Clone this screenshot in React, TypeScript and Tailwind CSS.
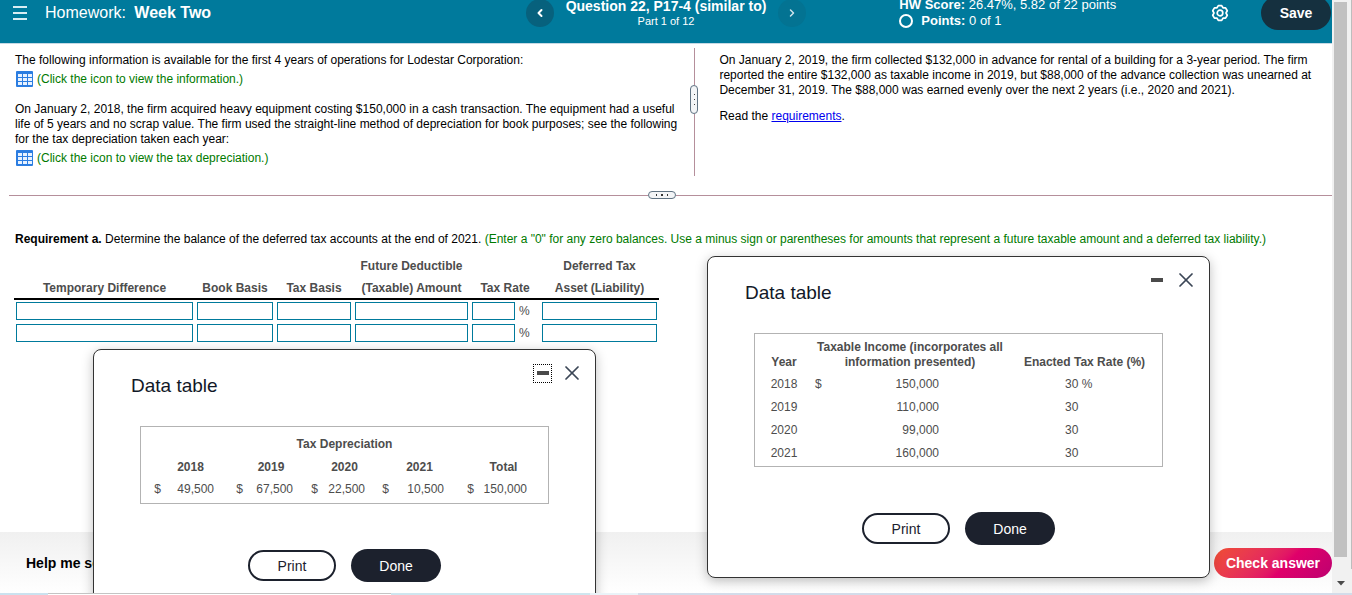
import { X, ChevronLeft, ChevronRight } from 'lucide-react';
import type { ReactNode } from 'react';

const incomeRows = [
  { year: '2018', sign: '$', income: '150,000', rate: '30', unit: '%' },
  { year: '2019', sign: '', income: '110,000', rate: '30', unit: '' },
  { year: '2020', sign: '', income: '99,000', rate: '30', unit: '' },
  { year: '2021', sign: '', income: '160,000', rate: '30', unit: '' },
];

const depreciation = [
  { label: '2018', amount: '49,500' },
  { label: '2019', amount: '67,500' },
  { label: '2020', amount: '22,500' },
  { label: '2021', amount: '10,500' },
  { label: 'Total', amount: '150,000' },
];

const answerFields = ['Temporary Difference', 'Book Basis', 'Tax Basis', '(Taxable) Amount', 'Tax Rate', 'Asset (Liability)'];

const TableIcon = () => (
  <svg width="17" height="16" viewBox="0 0 17 16" aria-hidden="true">
    <rect width="17" height="16" rx="1" fill="#2b7de1" />
    {[4, 8, 12].map((y) =>
      [2, 7, 12].map((x) => <rect key={`${x}-${y}`} x={x} y={y - 1} width="4" height="3" fill="#e8f2ff" />)
    )}
  </svg>
);

const GearIcon = () => (
  <svg width="18" height="18" viewBox="0 0 18 18" fill="none" stroke="white" strokeWidth="1.7" strokeLinejoin="round" aria-hidden="true">
    <path d="M7.3 1.6h3.400L12 3.800l2.560.020 1.710 2.960L15 9l1.270 2.220-1.710 2.960L12 14.200l-1.300 2.200H7.300L6 14.200l-2.560-.020-1.710-2.960L3 9 1.730 6.780l1.710-2.960L6 3.800z" />
    <circle cx="9" cy="9" r="2.8" />
  </svg>
);

const IconLink = ({ children }: { children: ReactNode }) => (
  <button type="button" className="flex items-center gap-1 pl-px text-left text-[#007a00]">
    <TableIcon />
    <span>{children}</span>
  </button>
);

interface DialogProps {
  id: string;
  place: string;
  focused?: boolean;
  children: ReactNode;
}

const DataDialog = ({ id, place, focused, children }: DialogProps) => (
  <section
    role="dialog"
    aria-labelledby={id}
    className={`absolute w-[503px] rounded-lg border border-[#333] bg-white pb-8 shadow-[0_3px_12px_rgba(0,0,0,0.25)] ${place}`}
  >
    <div className="flex h-19 items-start justify-between pr-[11px] pl-[37px]">
      <h2 id={id} className="pt-6 text-[19px] leading-6 text-[#111827]">Data table</h2>
      <div className="flex items-center gap-2 pt-[11px]">
        <button
          type="button"
          aria-label="Minimize"
          className={`flex size-[19px] items-center justify-center border border-dotted ${focused ? 'border-black' : 'border-transparent'}`}
        >
          <span className="h-1 w-3 bg-[#4a4a4a]" />
        </button>
        <button type="button" aria-label="Close" className="text-[#3b4656]">
          <X size={24} strokeWidth={1.75} />
        </button>
      </div>
    </div>
    <div className="mx-[46px] border border-[#b3b3b3] text-xs text-[#4d4d4d]">{children}</div>
    <div className="mt-[45px] flex items-center justify-center gap-[15px] text-sm">
      <button type="button" className="h-[31px] w-22 rounded-full border-2 border-[#1c212d] text-[#1c212d]">Print</button>
      <button type="button" className="h-[33px] w-[90px] rounded-full bg-[#1c212d] text-white">Done</button>
    </div>
  </section>
);

const Header = () => (
  <header className="h-11 shrink-0 overflow-hidden border-b border-[#c5d9e4] bg-[#007a9c] text-white">
    <div className="-mt-1 grid grid-cols-[1fr_auto_1fr] items-center">
      <div className="flex items-center gap-[18px] pl-[13px]">
        <button type="button" aria-label="Menu" className="flex w-[14px] flex-col gap-1">
          <span className="h-[2px] bg-[#d9edf3]" />
          <span className="h-[2px] bg-[#d9edf3]" />
          <span className="h-[2px] bg-[#d9edf3]" />
        </button>
        <h1 className="text-base">Homework: <b className="ml-1">Week Two</b></h1>
      </div>
      <div className="flex items-center gap-3">
        <button type="button" aria-label="Previous question" className="flex size-7 items-center justify-center rounded-full bg-[#07617d]">
          <ChevronLeft size={12} strokeWidth={4} />
        </button>
        <div className="text-center">
          <p className="text-sm leading-4 font-bold">Question 22, P17-4 (similar to)</p>
          <p className="text-[11px] leading-[14px]">Part 1 of 12</p>
        </div>
        <button type="button" aria-label="Next question" className="flex size-7 items-center justify-center rounded-full bg-[#037392] text-[#cfe4eb]">
          <ChevronRight size={12} strokeWidth={3} />
        </button>
      </div>
      <div className="flex items-center pl-[93px]">
        <div className="text-[13px] leading-4">
          <p><b>HW Score:</b> 26.47%, 5.82 of 22 points</p>
          <p className="flex items-center gap-2">
            <span className="size-3.5 rounded-full border-2 border-white" />
            <span><b>Points:</b> 0 of 1</span>
          </p>
        </div>
        <button type="button" aria-label="Settings" className="mr-8 ml-auto">
          <GearIcon />
        </button>
        <button type="button" className="mr-px h-[34px] w-[70px] rounded-full bg-[#15303f] text-sm font-bold">Save</button>
      </div>
    </div>
  </header>
);

const Problem = () => (
  <div className="grid h-32 grid-cols-[12fr_24px_11fr] text-xs leading-[15px]">
    <div className="flex flex-col items-start gap-[3px] pt-[5px] pl-[15px]">
      <p>The following information is available for the first 4 years of operations for Lodestar Corporation:</p>
      <IconLink>(Click the icon to view the information.)</IconLink>
      <p className="mt-3">
        On January 2, 2018, the firm acquired heavy equipment costing $150,000 in a cash transaction. The equipment had a useful
        life of 5 years and no scrap value. The firm used the straight-line method of depreciation for book purposes; see the
        following for the tax depreciation taken each year:
      </p>
      <IconLink>(Click the icon to view the tax depreciation.)</IconLink>
    </div>
    <div className="flex flex-col items-center">
      <span className="h-[37px] w-px bg-[#b58f9b]" />
      <button type="button" aria-label="Resize columns" className="flex h-[29px] w-2 flex-col items-center justify-center gap-1 rounded-full border border-[#5f7282] bg-[#f3f5f7]">
        <span className="size-px bg-[#444]" />
        <span className="size-px bg-[#444]" />
        <span className="size-px bg-[#444]" />
      </button>
      <span className="w-px flex-1 bg-[#b58f9b]" />
    </div>
    <div className="pt-[5px] pr-2 pl-[13px]">
      <p>
        On January 2, 2019, the firm collected $132,000 in advance for rental of a building for a 3-year period. The firm
        reported the entire $132,000 as taxable income in 2019, but $88,000 of the advance collection was unearned at
        December 31, 2019. The $88,000 was earned evenly over the next 2 years (i.e., 2020 and 2021).
      </p>
      <p className="mt-[11px]">
        Read the <a href="#requirements" className="text-[#0000ee] underline">requirements</a>.
      </p>
    </div>
  </div>
);

const AnswerTable = () => (
  <table className="ml-3.5 table-fixed border-collapse text-xs text-[#4d4d4d]">
    <colgroup>
      <col className="w-[181px]" />
      <col className="w-[80px]" />
      <col className="w-[78px]" />
      <col className="w-[117px]" />
      <col className="w-[70px]" />
      <col className="w-[119px]" />
    </colgroup>
    <thead>
      <tr className="h-[22px]">
        <td colSpan={3} />
        <th scope="col">Future Deductible</th>
        <td />
        <th scope="col">Deferred Tax</th>
      </tr>
      <tr className="h-[22px] border-b-2 border-black">
        {answerFields.map((field) => (
          <th key={field} scope="col" className="whitespace-nowrap">{field}</th>
        ))}
      </tr>
    </thead>
    <tbody>
      {[1, 2].map((row) => (
        <tr key={row} className="h-[22px]">
          {answerFields.map((field) => (
            <td key={field} className="p-0.5">
              <div className="flex h-[18px] items-center gap-1">
                <input
                  type="text"
                  aria-label={`${field}, row ${row}`}
                  className={`h-[18px] border border-[#007a9c] bg-white ${field === 'Tax Rate' ? 'w-[43px]' : 'w-full'}`}
                />
                {field === 'Tax Rate' && <span>%</span>}
              </div>
            </td>
          ))}
        </tr>
      ))}
    </tbody>
  </table>
);

const Scrollbar = () => (
  <div className="flex w-5 shrink-0 justify-between bg-[#f1f1f1]" aria-hidden="true">
    <div className="flex flex-col items-center pt-0.5 pl-0.5">
      <div className="w-[13px] flex-1 bg-[#c1c1c1]" />
      <div className="flex h-9 items-center pt-4">
        <svg width="8" height="5" viewBox="0 0 8 5"><path d="M0 0h8L4 4.5z" fill="#4a4a4a" /></svg>
      </div>
    </div>
    <div className="mb-6 w-px bg-[#bdbdbd]" />
  </div>
);

const App = () => (
  <div className="flex h-screen flex-col bg-white font-['Liberation_Sans',Arial,sans-serif] text-black">
    <div className="flex min-h-0 flex-1">
      <main className="relative flex min-w-0 flex-1 flex-col overflow-hidden">
        <Header />
        <div className="flex-1 pt-1">
          <Problem />
          <div className="mt-[15px] flex items-center pl-[9px]">
            <span className="h-px grow-39 bg-[#b58f9b]" />
            <button type="button" aria-label="Resize rows" className="flex h-2 w-7 items-center justify-center gap-1 rounded-full border border-[#5f7282] bg-[#f3f5f7]">
              <span className="h-0.5 w-px bg-[#333]" />
              <span className="size-0.5 bg-[#333]" />
              <span className="h-0.5 w-px bg-[#333]" />
            </button>
            <span className="h-px grow-40 bg-[#b58f9b]" />
          </div>
          <p className="mt-8 mb-2 pl-[15px] text-xs">
            <b>Requirement a.</b> Determine the balance of the deferred tax accounts at the end of 2021.{' '}
            <span className="text-[#007a00]">
              (Enter a "0" for any zero balances. Use a minus sign or parentheses for amounts that represent a future taxable
              amount and a deferred tax liability.)
            </span>
          </p>
          <AnswerTable />
        </div>
        <footer className="flex h-[61px] shrink-0 items-center justify-between bg-linear-to-b from-[#f0f0f0] to-white pl-[26px] text-sm font-bold">
          <button type="button">Help me solve this</button>
          <button type="button" className="h-[30px] w-[118px] rounded-full bg-linear-135 from-[#f04e30] via-[#e0006a] via-60% to-[#bd0070] text-white">
            Check answer
          </button>
        </footer>

        <DataDialog id="depreciation-title" place="top-[349px] left-[93px]" focused>
          <table className="mt-1.5 mb-[3px] w-full table-fixed">
            <colgroup>
              <col className="w-5" />
              <col className="w-[53px]" />
              <col className="w-[29px]" />
              <col className="w-[50px]" />
              <col className="w-[25px]" />
              <col className="w-[47px]" />
              <col className="w-6" />
              <col className="w-[55px]" />
              <col className="w-[30px]" />
              <col className="w-[53px]" />
              <col />
            </colgroup>
            <thead>
              <tr className="h-[22px]">
                <th colSpan={11} scope="colgroup">Tax Depreciation</th>
              </tr>
              <tr className="h-[23px]">
                {depreciation.flatMap((d) => [
                  <td key={`${d.label}-sign`} />,
                  <th key={d.label} scope="col" className="pl-1.5">{d.label}</th>,
                ])}
              </tr>
            </thead>
            <tbody>
              <tr className="h-[22px] text-right">
                {depreciation.flatMap((d) => [
                  <td key={`${d.label}-sign`}>$</td>,
                  <td key={d.label}>{d.amount}</td>,
                ])}
              </tr>
            </tbody>
          </table>
        </DataDialog>

        <DataDialog id="income-title" place="top-[256px] left-[707px]">
          <table className="mb-0.5 w-full table-fixed">
            <colgroup>
              <col className="w-[58px]" />
              <col className="w-[194px]" />
              <col />
            </colgroup>
            <thead>
              <tr className="h-[38px] align-bottom leading-[15px]">
                <th scope="col" className="pb-0.5">Year</th>
                <th scope="col" className="pb-0.5">Taxable Income (incorporates all information presented)</th>
                <th scope="col" className="pb-0.5">Enacted Tax Rate (%)</th>
              </tr>
            </thead>
            <tbody>
              {incomeRows.map((r) => (
                <tr key={r.year} className="h-[23px]">
                  <td className="text-center">{r.year}</td>
                  <td className="pr-[68px] pl-0.5">
                    <div className="flex justify-between"><span>{r.sign}</span><span>{r.income}</span></div>
                  </td>
                  <td className="pl-[58px]">{r.rate} {r.unit}</td>
                </tr>
              ))}
            </tbody>
          </table>
        </DataDialog>
      </main>
      <Scrollbar />
    </div>
    {/* sliver of the window behind the page */}
    <div className="flex h-0.5 shrink-0">
      <span className="w-12 bg-[#cbe2ef]" />
      <span className="w-[343px] border-t border-[#c4c4c4] bg-white" />
      <span className="w-[199px] bg-[#cfe6ef]" />
      <span className="w-12 bg-[#eaf3f8]" />
      <span className="flex-1 bg-[#d3dcea]" />
    </div>
  </div>
);

export default App;
